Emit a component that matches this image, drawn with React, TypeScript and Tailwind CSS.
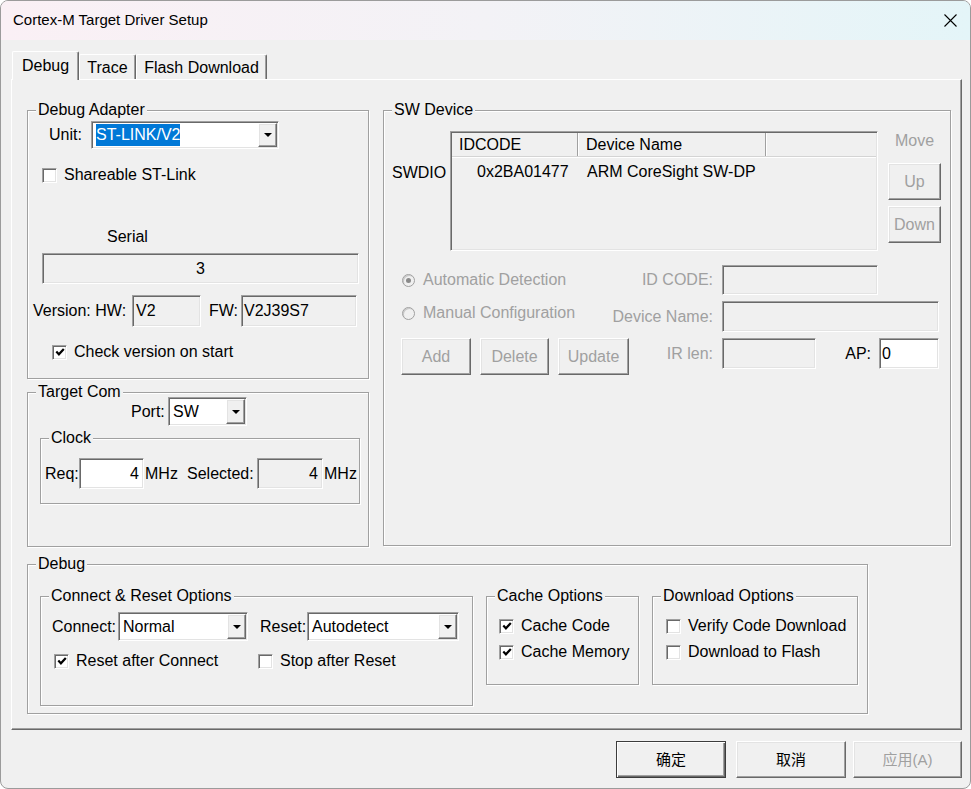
import type { ReactNode } from "react";

const HUNDIDO =
  "border border-t-[#a0a0a0] border-l-[#a0a0a0] border-b-white border-r-white shadow-[inset_1px_1px_0_#696969,inset_-1px_-1px_0_#e3e3e3]";
const ELEVADO =
  "border border-t-white border-l-white border-b-[#696969] border-r-[#696969] shadow-[inset_-1px_-1px_0_#a0a0a0,inset_1px_1px_0_#e3e3e3]";
const GRABADO = "border border-[#a0a0a0] shadow-[inset_1px_1px_0_#fff,1px_1px_0_#fff]";
const GRIS = "text-[#a0a0a0]";

/** Marco con título al estilo de los GroupBox clásicos de Windows. */
function Grupo({ titulo, className = "", children }: { titulo: string; className?: string; children?: ReactNode }) {
  return (
    <div className={`${GRABADO} ${className}`}>
      <div className="-mt-[10px] ml-[8px] w-fit bg-[#f0f0f0] px-[2px] leading-[18px] whitespace-nowrap">{titulo}</div>
      {children}
    </div>
  );
}

function Campo({ className = "", blanco = false, children }: { className?: string; blanco?: boolean; children?: ReactNode }) {
  return (
    <div className={`${HUNDIDO} ${blanco ? "bg-white" : "bg-[#f0f0f0]"} flex items-center whitespace-nowrap ${className}`}>
      {children}
    </div>
  );
}

function Combo({ className = "", texto, marcado = false }: { className?: string; texto: string; marcado?: boolean }) {
  return (
    <div className={`${HUNDIDO} bg-white flex items-stretch ${className}`}>
      <div className="flex-1 flex items-center pl-[4px] whitespace-nowrap">
        {marcado ? <span className="bg-[#0078d7] text-white leading-[22px]">{texto}</span> : texto}
      </div>
      <div className={`${ELEVADO} bg-[#f0f0f0] w-[19px] m-[1px] flex items-center justify-center`}>
        <svg width="8" height="4" viewBox="0 0 8 4">
          <path d="M0 0h8L4 4z" fill="#000" />
        </svg>
      </div>
    </div>
  );
}

function Casilla({ marcada = false, className = "", children }: { marcada?: boolean; className?: string; children: ReactNode }) {
  return (
    <div className={`flex items-center whitespace-nowrap h-[18px] ${className}`}>
      <div className={`${HUNDIDO} bg-white w-[15px] h-[15px] shrink-0 flex items-center justify-center`}>
        {marcada && (
          <svg width="10" height="10" viewBox="0 0 10 10">
            <path d="M1.3 4.6l2.6 2.7L8.8 2" stroke="#000" strokeWidth="2.2" fill="none" />
          </svg>
        )}
      </div>
      <span className="ml-[7px]">{children}</span>
    </div>
  );
}

function Radio({ marcada = false, className = "", children }: { marcada?: boolean; className?: string; children: ReactNode }) {
  return (
    <div className={`flex items-center whitespace-nowrap ${GRIS} ${className}`}>
      <div className="w-[13px] h-[13px] shrink-0 rounded-full border border-[#a0a0a0] bg-[#f0f0f0] shadow-[inset_1px_1px_0_#c8c8c8] flex items-center justify-center">
        {marcada && <div className="w-[5px] h-[5px] rounded-full bg-[#8a8a8a]" />}
      </div>
      <span className="ml-[8px]">{children}</span>
    </div>
  );
}

function Boton({ className = "", desactivado = false, children }: { className?: string; desactivado?: boolean; children: ReactNode }) {
  return (
    <button
      type="button"
      className={`${ELEVADO} bg-[#f0f0f0] flex items-center justify-center whitespace-nowrap ${desactivado ? GRIS : "text-black"} ${className}`}
    >
      {children}
    </button>
  );
}

export default function App() {
  return (
    <div className="w-[971px] h-[789px] overflow-hidden rounded-[8px] border border-[#9b9b9b] bg-[#f0f0f0] text-black text-[16px] leading-[18px] font-['Liberation_Sans',Arial,sans-serif]">
      {/* barra de título */}
      <div className="h-[39px] flex items-center pl-[12px] bg-linear-to-r from-[#faf0f5] via-[#f3f2f6] to-[#e4f5f8]">
        <span className="text-[15px] pb-[2px]">Cortex-M Target Driver Setup</span>
        <svg className="ml-auto mr-[13px]" width="13" height="13" viewBox="0 0 13 13">
          <path d="M0.5 0.5l12 12M12.5 0.5l-12 12" stroke="#000" strokeWidth="1.1" />
        </svg>
      </div>

      <div className="pl-[10px]">
        {/* pestañas */}
        <div className="flex items-end pl-[1px] mt-[11px]">
          <div className="relative z-10 -mb-px w-[67px] h-[29px] bg-[#f0f0f0] border-t border-l border-r border-t-white border-l-white border-r-[#696969] shadow-[inset_-1px_0_0_#a0a0a0] rounded-t-[2px] flex items-center justify-center">
            Debug
          </div>
          <div className="w-[57px] h-[25px] pt-[2px] bg-[#f0f0f0] border-t border-l border-r border-t-white border-l-white border-r-[#696969] shadow-[inset_-1px_0_0_#a0a0a0] rounded-t-[2px] flex items-center justify-center">
            Trace
          </div>
          <div className="w-[131px] h-[25px] pt-[2px] bg-[#f0f0f0] border-t border-l border-r border-t-white border-l-white border-r-[#696969] shadow-[inset_-1px_0_0_#a0a0a0] rounded-t-[2px] flex items-center justify-center">
            Flash Download
          </div>
        </div>

        {/* panel de la pestaña */}
        <div className="w-[951px] h-[651px] bg-[#f0f0f0] border border-t-white border-l-white border-r-[#696969] border-b-[#696969] shadow-[inset_-1px_-1px_0_#a0a0a0] pl-[15px] pt-[30px]">
          <div className="flex items-start">
            <div className="w-[342px] flex flex-col">
              <Grupo titulo="Debug Adapter" className="h-[269px]">
                <div className="flex items-center mt-[2px] ml-[21px]">
                  <span className="w-[42px]">Unit:</span>
                  <Combo className="w-[188px] h-[28px]" texto="ST-LINK/V2" marcado />
                </div>
                <Casilla className="mt-[17px] ml-[14px]">Shareable ST-Link</Casilla>
                <div className="mt-[44px] ml-[79px]">Serial</div>
                <Campo className="mt-[7px] ml-[14px] w-[317px] h-[31px] justify-center">3</Campo>
                <div className="flex items-center mt-[11px] ml-[5px] whitespace-nowrap">
                  <span className="w-[99px]">Version: HW:</span>
                  <Campo className="w-[69px] h-[32px] pl-[3px]">V2</Campo>
                  <span className="ml-[8px] w-[32px]">FW:</span>
                  <Campo className="w-[116px] h-[32px] pl-[2px]">V2J39S7</Campo>
                </div>
                <Casilla marcada className="mt-[16px] ml-[24px]">Check version on start</Casilla>
              </Grupo>

              <Grupo titulo="Target Com" className="mt-[13px] h-[155px]">
                <div className="flex items-center -mt-[4px] ml-[103px]">
                  <span className="w-[37px]">Port:</span>
                  <Combo className="w-[79px] h-[29px]" texto="SW" />
                </div>
                <Grupo titulo="Clock" className="mt-[12px] ml-[12px] w-[320px] h-[66px]">
                  <div className="flex items-center mt-[11px] ml-[4px] whitespace-nowrap">
                    <span className="w-[34px]">Req:</span>
                    <Campo blanco className="w-[65px] h-[31px] justify-end pr-[4px]">4</Campo>
                    <span className="w-[43px] pl-[1px]">MHz</span>
                    <span className="w-[70px]">Selected:</span>
                    <Campo className="w-[66px] h-[31px] justify-end pr-[4px]">4</Campo>
                    <span className="pl-[1px]">MHz</span>
                  </div>
                </Grupo>
              </Grupo>
            </div>

            <Grupo titulo="SW Device" className="ml-[14px] w-[568px] h-[436px]">
              <div className="flex items-start">
                <div className="w-[66px] pl-[8px] mt-[45px]">SWDIO</div>
                <div className={`${HUNDIDO} mt-[12px] w-[428px] h-[120px] bg-[#f0f0f0] p-[1px] flex flex-col whitespace-nowrap`}>
                  <div className="flex h-[24px] border-b border-b-[#d4d4d4] shadow-[0_1px_0_#fff]">
                    <div className="w-[126px] pl-[7px] flex items-center border-r border-r-[#a0a0a0]">IDCODE</div>
                    <div className="w-[188px] pl-[8px] flex items-center border-r border-r-[#a0a0a0] shadow-[inset_1px_0_0_#fff]">Device Name</div>
                    <div className="flex-1 shadow-[inset_1px_0_0_#fff]" />
                  </div>
                  <div className="flex pt-[6px]">
                    <div className="w-[126px] pl-[25px]">0x2BA01477</div>
                    <div className="pl-[9px]">ARM CoreSight SW-DP</div>
                  </div>
                </div>
                <div className="ml-[10px] w-[53px] flex flex-col items-center">
                  <div className={`mt-[13px] ${GRIS}`}>Move</div>
                  <Boton desactivado className="mt-[13px] w-[53px] h-[37px]">Up</Boton>
                  <Boton desactivado className="mt-[6px] w-[53px] h-[37px]">Down</Boton>
                </div>
              </div>

              <div className="flex items-center h-[30px] mt-[14px] whitespace-nowrap">
                <Radio marcada className="ml-[18px] w-[198px]">Automatic Detection</Radio>
                <span className={`w-[113px] text-right ${GRIS}`}>ID CODE:</span>
                <Campo className="ml-[9px] w-[156px] h-[30px]" />
              </div>
              <div className="flex items-center h-[31px] mt-[6px] whitespace-nowrap">
                <Radio className="ml-[18px] w-[198px] mb-[7px]">Manual Configuration</Radio>
                <span className={`w-[113px] text-right ${GRIS}`}>Device Name:</span>
                <Campo className="ml-[9px] w-[217px] h-[31px]" />
              </div>
              <div className="flex items-start mt-[6px] whitespace-nowrap">
                <Boton desactivado className="ml-[17px] w-[70px] h-[37px]">Add</Boton>
                <Boton desactivado className="ml-[9px] w-[69px] h-[37px]">Delete</Boton>
                <Boton desactivado className="ml-[9px] w-[71px] h-[37px]">Update</Boton>
                <div className="flex items-center h-[31px]">
                  <span className={`w-[84px] text-right ${GRIS}`}>IR len:</span>
                  <Campo className="ml-[9px] w-[94px] h-[31px]" />
                  <span className="w-[55px] text-right">AP:</span>
                  <Campo blanco className="ml-[8px] w-[60px] h-[31px] pl-[2px]">0</Campo>
                </div>
              </div>
            </Grupo>
          </div>

          <Grupo titulo="Debug" className="mt-[17px] w-[841px] h-[150px]">
            <div className="flex items-start mt-[23px] ml-[12px]">
              <Grupo titulo="Connect & Reset Options" className="w-[433px] h-[110px]">
                <div className="flex items-center mt-[7px] ml-[11px] whitespace-nowrap">
                  <span className="w-[66px]">Connect:</span>
                  <Combo className="w-[130px] h-[29px]" texto="Normal" />
                  <span className="ml-[12px] w-[47px]">Reset:</span>
                  <Combo className="w-[152px] h-[29px]" texto="Autodetect" />
                </div>
                <div className="flex mt-[11px] ml-[13px]">
                  <Casilla marcada className="w-[204px]">Reset after Connect</Casilla>
                  <Casilla>Stop after Reset</Casilla>
                </div>
              </Grupo>

              <Grupo titulo="Cache Options" className="ml-[13px] w-[153px] h-[89px]">
                <Casilla marcada className="mt-[12px] ml-[12px] w-[132px] overflow-hidden">Cache Code</Casilla>
                <Casilla marcada className="mt-[8px] ml-[12px] w-[132px] overflow-hidden">Cache Memory</Casilla>
              </Grupo>

              <Grupo titulo="Download Options" className="ml-[13px] w-[206px] h-[89px]">
                <Casilla className="mt-[12px] ml-[13px] w-[185px] overflow-hidden">Verify Code Download</Casilla>
                <Casilla className="mt-[8px] ml-[13px] w-[185px] overflow-hidden">Download to Flash</Casilla>
              </Grupo>
            </div>
          </Grupo>
        </div>

        {/* botones del diálogo */}
        <div className="flex justify-end mt-[11px] pr-[8px] text-[15px] font-['Liberation_Sans','Noto_Sans_CJK_SC',sans-serif]">
          <button
            type="button"
            className="w-[110px] h-[37px] bg-[#f0f0f0] border border-[#3c3c3c] shadow-[inset_1px_1px_0_#fff,inset_-1px_-1px_0_#696969,inset_-2px_-2px_0_#a0a0a0] flex items-center justify-center"
          >
            确定
          </button>
          <Boton className="ml-[10px] w-[110px] h-[37px]">取消</Boton>
          <Boton desactivado className="ml-[7px] w-[109px] h-[37px]">应用(A)</Boton>
        </div>
      </div>
    </div>
  );
}
